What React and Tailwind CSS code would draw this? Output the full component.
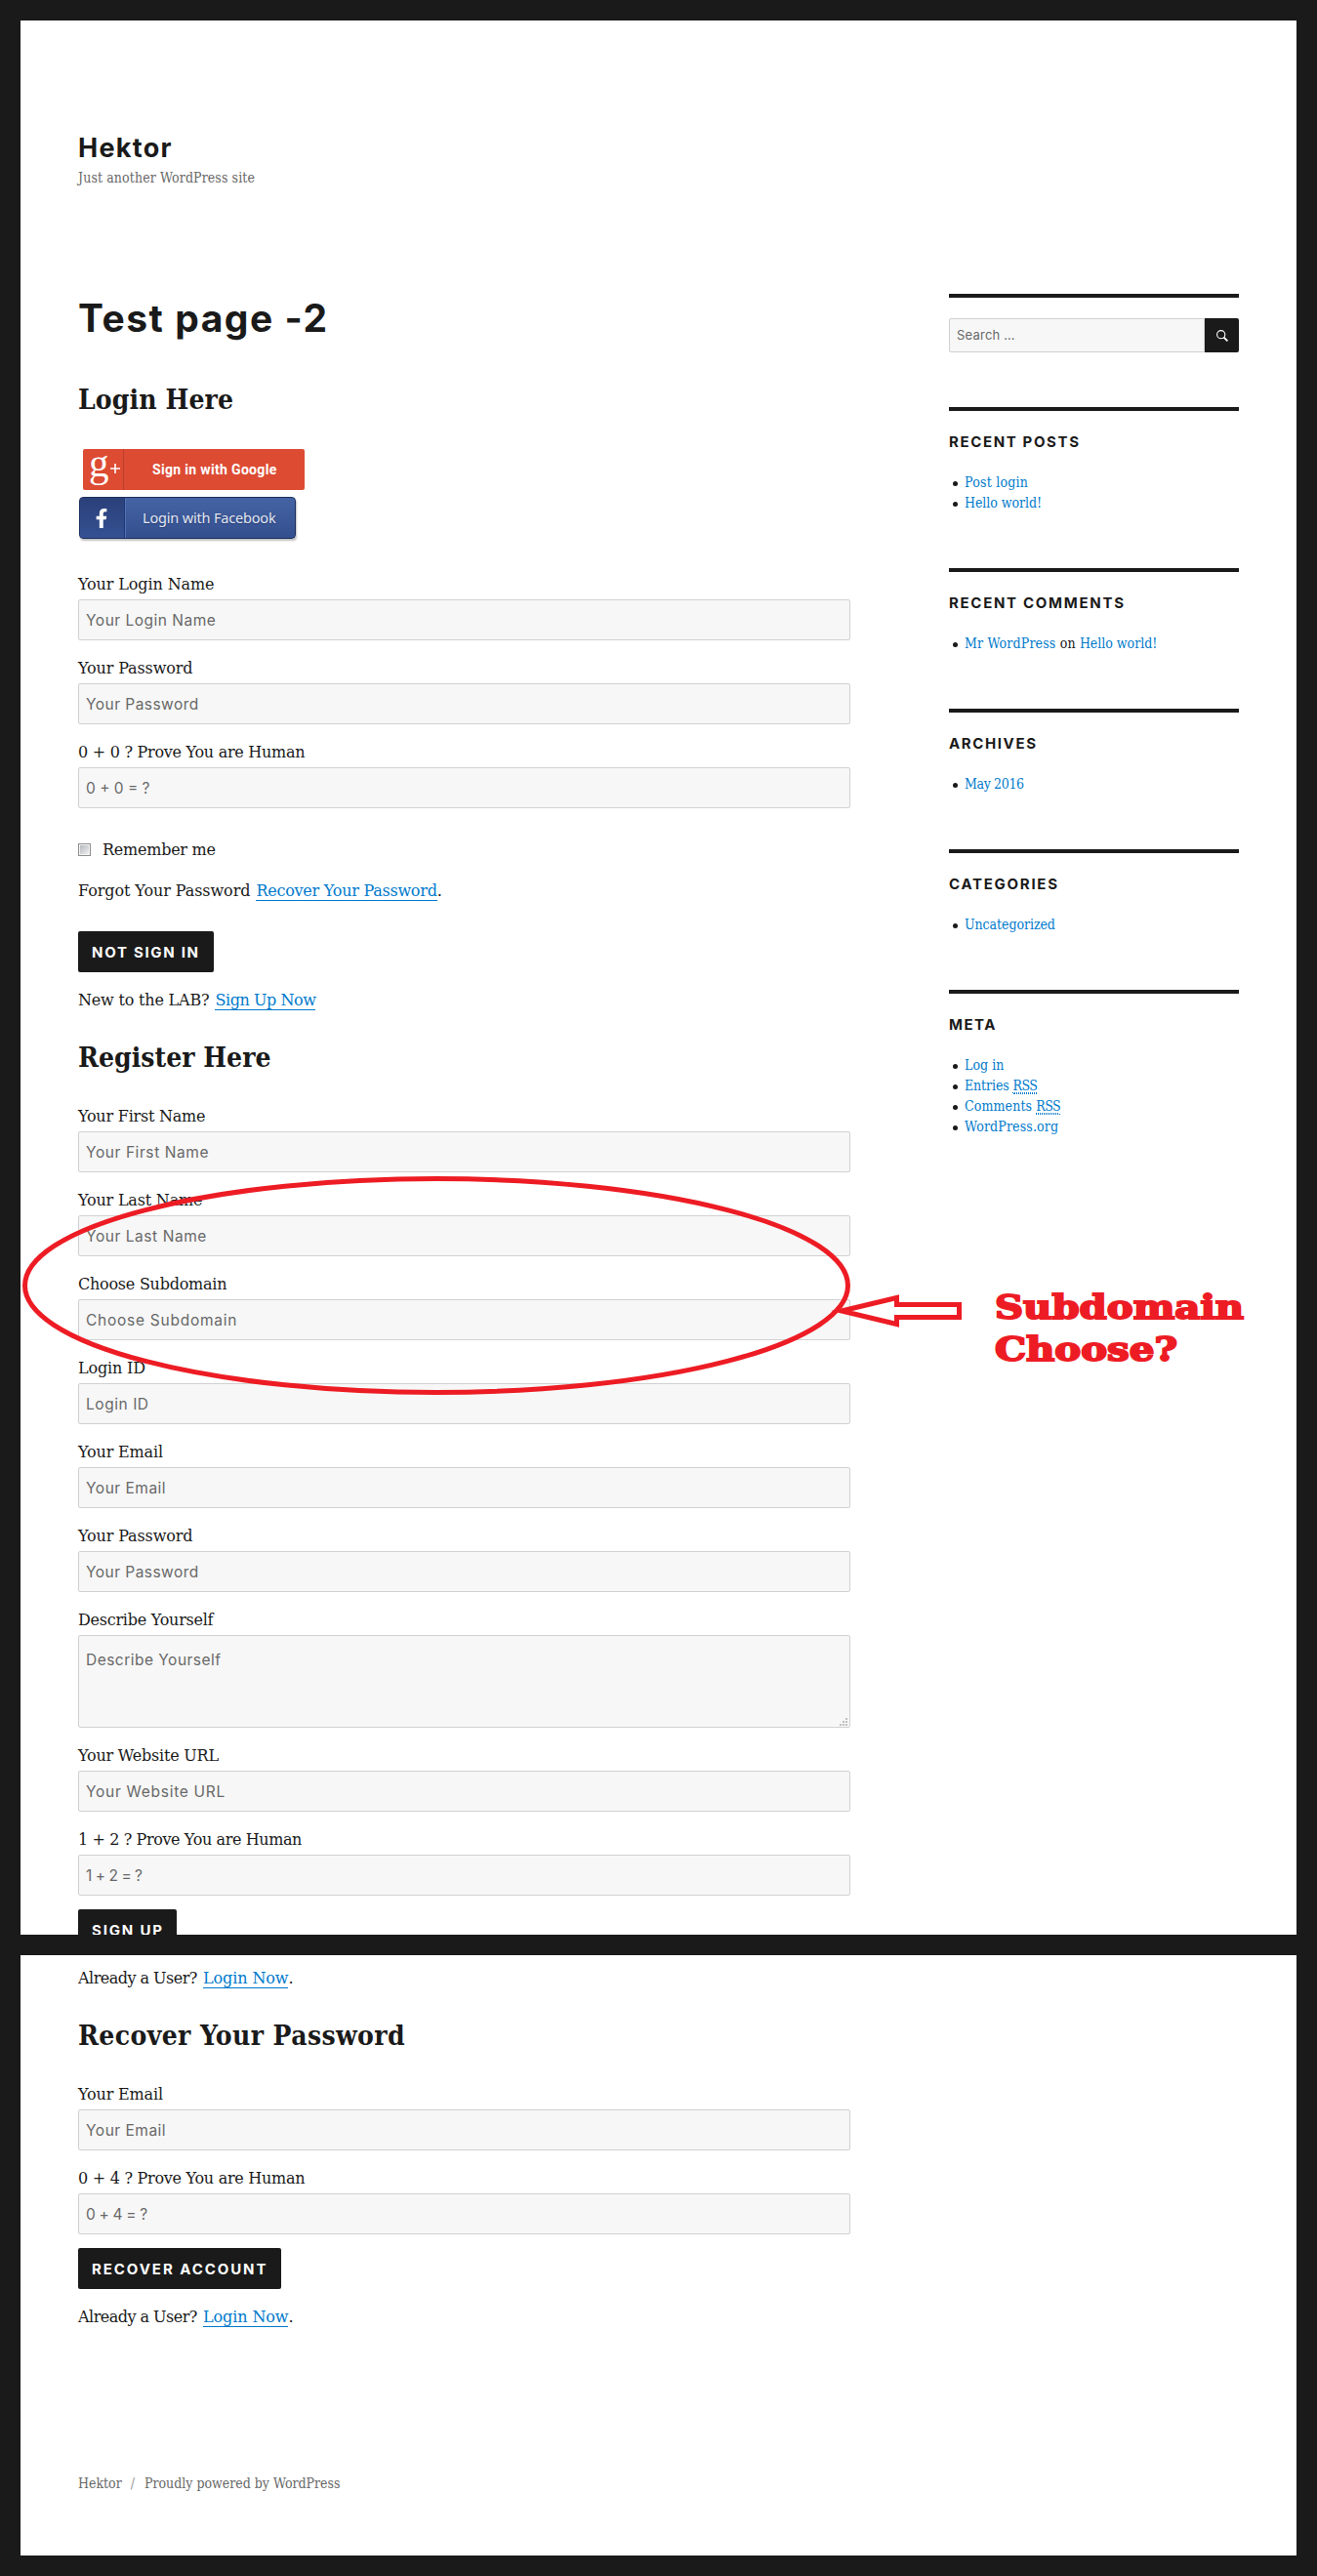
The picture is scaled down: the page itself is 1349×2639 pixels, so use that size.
import { FaFacebookF } from "react-icons/fa";

const serif = "font-['DejaVu_Serif',serif]";
const condensed = "font-['DejaVu_Serif_Condensed','DejaVu_Serif',serif]";
const sans = "font-[Inter,sans-serif]";

function Field({ label, lt = "tracking-[-0.2px]", hint, ht, className = "mb-3.5", area }) {
  const box = `block w-full rounded-[2px] border border-[#d1d1d1] bg-[#f7f7f7] px-[7px] text-[15.5px] text-[#1a1a1a] placeholder:text-[#686868] placeholder:opacity-100 ${sans} ${ht}`;
  return (
    <label className={`block ${className}`}>
      <span className={`block leading-[30px] ${lt}`}>{label}</span>
      {area ? (
        <span className="relative block">
          <textarea className={`${box} h-[95px] resize-none py-[11px] leading-7`} placeholder={hint} />
          <ResizeGrip />
        </span>
      ) : (
        <input className={`${box} h-[42px]`} placeholder={hint} />
      )}
    </label>
  );
}

function ResizeGrip() {
  return (
    <svg className="absolute right-[3px] bottom-[2px] size-2" viewBox="0 0 8 8" fill="#c0c0c0">
      <path d="M6 0h2v2H6zM3 3h2v2H3zM6 3h2v2H6zM0 6h2v2H0zM3 6h2v2H3zM6 6h2v2H6z" />
    </svg>
  );
}

function Heading({ children, className }) {
  return (
    <h2 className={`text-[28px] leading-9 font-bold ${condensed} ${className}`}>
      {children}
    </h2>
  );
}

function Button({ children, className }) {
  return (
    <button
      className={`block h-[42px] rounded-[2px] bg-[#1a1a1a] pl-[14px] text-left text-[15px] leading-none font-bold text-white ${sans} ${className}`}
    >
      {children}
    </button>
  );
}

function A({ children, className }) {
  return (
    <a href="#" className={`ml-px border-b border-[#007acc] text-[#007acc] ${className}`}>
      {children}
    </a>
  );
}

function AlreadyUser({ className }) {
  return (
    <p className={`leading-[30px] ${className}`}>
      <span className="tracking-[-0.52px]">Already a User?</span>{" "}
      <A className="tracking-[-0.1px]">Login Now</A>.
    </p>
  );
}

function Widget({ title, track, children }) {
  return (
    <section className="mb-14 border-t-4 border-[#1a1a1a] pt-[22px]">
      <h3 className={`text-[15px] leading-5 font-bold ${sans} ${track}`}>{title}</h3>
      <ul className={`mt-[21px] text-[14px] leading-[21px] text-[#007acc] ${condensed}`}>{children}</ul>
    </section>
  );
}

function Item({ children, className = "" }) {
  return (
    <li className="flex items-center">
      <span className="mt-0.5 mr-[7px] ml-[4px] size-[5px] rounded-full bg-[#1a1a1a]" />
      <span className={className}>{children}</span>
    </li>
  );
}

function Rss() {
  return (
    <abbr className="border-b border-dotted border-[#007acc] tracking-[-0.6px] underline decoration-dotted decoration-1 underline-offset-2">
      RSS
    </abbr>
  );
}

function SocialButtons() {
  return (
    <div className="mt-8">
      <button className="ml-[5px] flex h-[42px] w-[227px] items-center rounded-[2px] bg-[#dd4b33] text-white">
        <span className="flex h-full w-[42px] items-center border-r border-[#b93f2c] pl-[6px] font-['Liberation_Serif',serif]">
          <span className="-mt-[13px] text-[41px] leading-none">g</span>
          <svg className="-mt-0.5 ml-px size-[10px]" viewBox="0 0 10 10" stroke="white" strokeWidth="1.6">
            <path d="M5 0v10M0 5h10" />
          </svg>
        </span>
        <span className="ml-[29px] font-[Roboto,sans-serif] text-[14px] font-bold tracking-[0.33px]">
          Sign in with Google
        </span>
      </button>
      <button className="mt-[7px] ml-px flex h-[43px] w-[222px] items-center overflow-hidden rounded-[4px] border border-[#1b2e5e] bg-linear-to-b from-[#4563a3] to-[#344f8e] text-white shadow-[1px_2px_2px_rgba(0,0,0,0.25)]">
        <span className="flex h-full w-[46px] items-center justify-center border-r border-[#1f3873] bg-linear-to-b from-[#2a4079] to-[#355192] shadow-[1px_0_0_#5373b5]">
          <FaFacebookF className="mr-px size-5" />
        </span>
        <span className="mt-px ml-[18px] font-['Noto_Sans',sans-serif] text-[14.5px] tracking-[-0.18px] text-[#e3e8f3] [text-shadow:0_1px_1px_#22386f]">
          Login with Facebook
        </span>
      </button>
    </div>
  );
}

function Annotation() {
  return (
    <svg
      className="pointer-events-none absolute top-[1200px] left-0 h-[240px] w-[1349px]"
      viewBox="0 1200 1349 240"
      fill="none"
      stroke="#ed1c24"
    >
      <ellipse cx="447" cy="1317" rx="421.5" ry="109.5" strokeWidth="5" />
      <path
        d="M862 1343L918.5 1329.5V1336.5H982.5V1349.5H918.5V1356.5Z"
        fill="#fff"
        strokeWidth="5"
        strokeMiterlimit="20"
      />
      <g
        className="font-['DejaVu_Serif',serif] text-[33px] font-bold"
        fill="#ed1c24"
        strokeWidth="2"
      >
        <text x="1019" y="1350.5" textLength="255" lengthAdjust="spacingAndGlyphs">
          Subdomain
        </text>
        <text x="1019" y="1393.5" textLength="187" lengthAdjust="spacingAndGlyphs">
          Choose?
        </text>
      </g>
    </svg>
  );
}

function LoginForm() {
  return (
    <>
      <Heading className="mt-[43px] tracking-[0.12px]">Login Here</Heading>
      <SocialButtons />
      <div className="mt-8">
        <Field label="Your Login Name" lt="tracking-[-0.11px]" hint="Your Login Name" ht="tracking-[0.5px]" />
        <Field label="Your Password" lt="tracking-[-0.13px]" hint="Your Password" ht="tracking-[0.46px]" />
        <Field label="0 + 0 ? Prove You are Human" lt="tracking-[-0.27px]" hint="0 + 0 = ?" ht="tracking-[0px]" className="mb-7" />
      </div>
      <label className="flex h-7 items-center tracking-[-0.24px]">
        <input
          type="checkbox"
          className="mr-3 size-[13px] appearance-none border border-[#8e8f8f] bg-linear-to-br from-[#aeb3b9] to-[#f6f6f6] shadow-[inset_0_0_0_1px_#f4f4f4]"
        />
        <span className="pt-0.5 leading-[30px]">Remember me</span>
      </label>
      <p className="mt-3.5 leading-[30px]">
        <span className="tracking-[-0.08px]">Forgot Your Password</span>{" "}
        <A className="tracking-[-0.25px]">Recover Your Password</A>.
      </p>
      <Button className="mt-[26px] w-[139px] tracking-[1.7px]">NOT SIGN IN</Button>
      <p className="mt-3.5 leading-[30px]">
        <span className="tracking-[-0.19px]">New to the LAB?</span>{" "}
        <A className="tracking-[-0.44px]">Sign Up Now</A>
      </p>
    </>
  );
}

function RegisterForm() {
  return (
    <>
      <Heading className="mt-[26px] mb-[27px] tracking-[0.03px]">Register Here</Heading>
      <Field label="Your First Name" lt="tracking-[-0.22px]" hint="Your First Name" ht="tracking-[0.58px]" />
      <Field label="Your Last Name" lt="tracking-[-0.19px]" hint="Your Last Name" ht="tracking-[0.56px]" />
      <Field label="Choose Subdomain" lt="tracking-[-0.24px]" hint="Choose Subdomain" ht="tracking-[0.74px]" />
      <Field label="Login ID" lt="tracking-[-0.17px]" hint="Login ID" ht="tracking-[0.55px]" />
      <Field label="Your Email" lt="tracking-[-0.16px]" hint="Your Email" ht="tracking-[0.5px]" />
      <Field label="Your Password" lt="tracking-[-0.13px]" hint="Your Password" ht="tracking-[0.46px]" />
      <Field label="Describe Yourself" lt="tracking-[-0.25px]" hint="Describe Yourself" ht="tracking-[0.48px]" area />
      <Field label="Your Website URL" lt="tracking-[-0.21px]" hint="Your Website URL" ht="tracking-[0.72px]" />
      <Field label="1 + 2 ? Prove You are Human" lt="tracking-[-0.39px]" hint="1 + 2 = ?" ht="tracking-[-0.45px]" />
      <Button className="w-[101px] tracking-[1.84px]">SIGN UP</Button>
    </>
  );
}

function Sidebar() {
  return (
    <aside className="ml-[101px] w-[297px]">
      <section className="mb-14 border-t-4 border-[#1a1a1a] pt-[21px]">
        <form className="flex h-[35px]">
          <input
            className={`min-w-0 flex-1 rounded-l-[2px] border border-[#d1d1d1] bg-[#f7f7f7] px-[7px] text-[13px] tracking-[0.22px] placeholder:text-[#686868] placeholder:opacity-100 ${sans}`}
            placeholder="Search …"
          />
          <button type="button" className="flex w-[35px] items-center justify-center rounded-r-[2px] bg-[#1a1a1a]">
            <svg className="size-3" viewBox="0 0 12 12" fill="none" stroke="#fff">
              <circle cx="4.7" cy="4.7" r="4.1" strokeWidth="1.1" />
              <path d="M7.6 7.6L11.4 11.4" strokeWidth="1.8" />
            </svg>
          </button>
        </form>
      </section>
      <Widget title="RECENT POSTS" track="tracking-[1.63px]">
        <Item className="tracking-[0.24px]">Post login</Item>
        <Item className="tracking-[-0.05px]">Hello world!</Item>
      </Widget>
      <Widget title="RECENT COMMENTS" track="tracking-[1.7px]">
        <Item className="tracking-[0.17px]">
          Mr WordPress <span className="text-[#1a1a1a]">on</span>{" "}
          <span className="tracking-[-0.02px]">Hello world!</span>
        </Item>
      </Widget>
      <Widget title="ARCHIVES" track="tracking-[1.61px]">
        <Item className="tracking-[-0.36px]">May 2016</Item>
      </Widget>
      <Widget title="CATEGORIES" track="tracking-[1.72px]">
        <Item className="tracking-[-0.06px]">Uncategorized</Item>
      </Widget>
      <Widget title="META" track="tracking-[1.51px]">
        <Item className="tracking-[0.06px]">Log in</Item>
        <Item className="tracking-[-0.1px]">Entries <Rss /></Item>
        <Item className="tracking-[0.12px]">Comments <Rss /></Item>
        <Item className="tracking-[0.15px]">WordPress.org</Item>
      </Widget>
    </aside>
  );
}

export default function App() {
  return (
    <div className={`relative flex w-[1349px] flex-col gap-[21px] bg-[#1a1a1a] p-[21px] text-[16px] text-[#1a1a1a] ${serif}`}>
      <div className="h-[1961px] overflow-hidden bg-white pl-[59px]">
        <header className="pt-[115px]">
          <h1 className={`text-[27px] leading-8 font-bold tracking-[1.28px] ${sans}`}>Hektor</h1>
          <p className={`mt-1 text-[14px] leading-5 tracking-[0.11px] text-[#686868] ${condensed}`}>
            Just another WordPress site
          </p>
        </header>
        <div className="mt-[109px] flex">
          <main className="w-[791px] pt-0.5">
            <h1 className={`text-[39px] leading-[46px] font-bold tracking-[1.52px] ${sans}`}>Test page -2</h1>
            <LoginForm />
            <RegisterForm />
          </main>
          <Sidebar />
        </div>
      </div>
      <div className="h-[615px] bg-white pt-[9px] pl-[59px]">
        <div className="w-[791px]">
          <AlreadyUser />
          <Heading className="mt-[26px] mb-[27px] tracking-[0.39px]">Recover Your Password</Heading>
          <Field label="Your Email" lt="tracking-[-0.16px]" hint="Your Email" ht="tracking-[0.5px]" />
          <Field label="0 + 4 ? Prove You are Human" lt="tracking-[-0.27px]" hint="0 + 4 = ?" ht="tracking-[-0.3px]" />
          <Button className="w-[208px] tracking-[1.93px]">RECOVER ACCOUNT</Button>
          <AlreadyUser className="mt-3.5" />
        </div>
        <footer className={`mt-[145px] flex text-[14px] leading-5 text-[#686868] ${condensed}`}>
          <span>Hektor</span>
          <span className="mr-[10px] ml-[9px] opacity-70">/</span>
          <span>Proudly powered by WordPress</span>
        </footer>
      </div>
      <Annotation />
    </div>
  );
}
